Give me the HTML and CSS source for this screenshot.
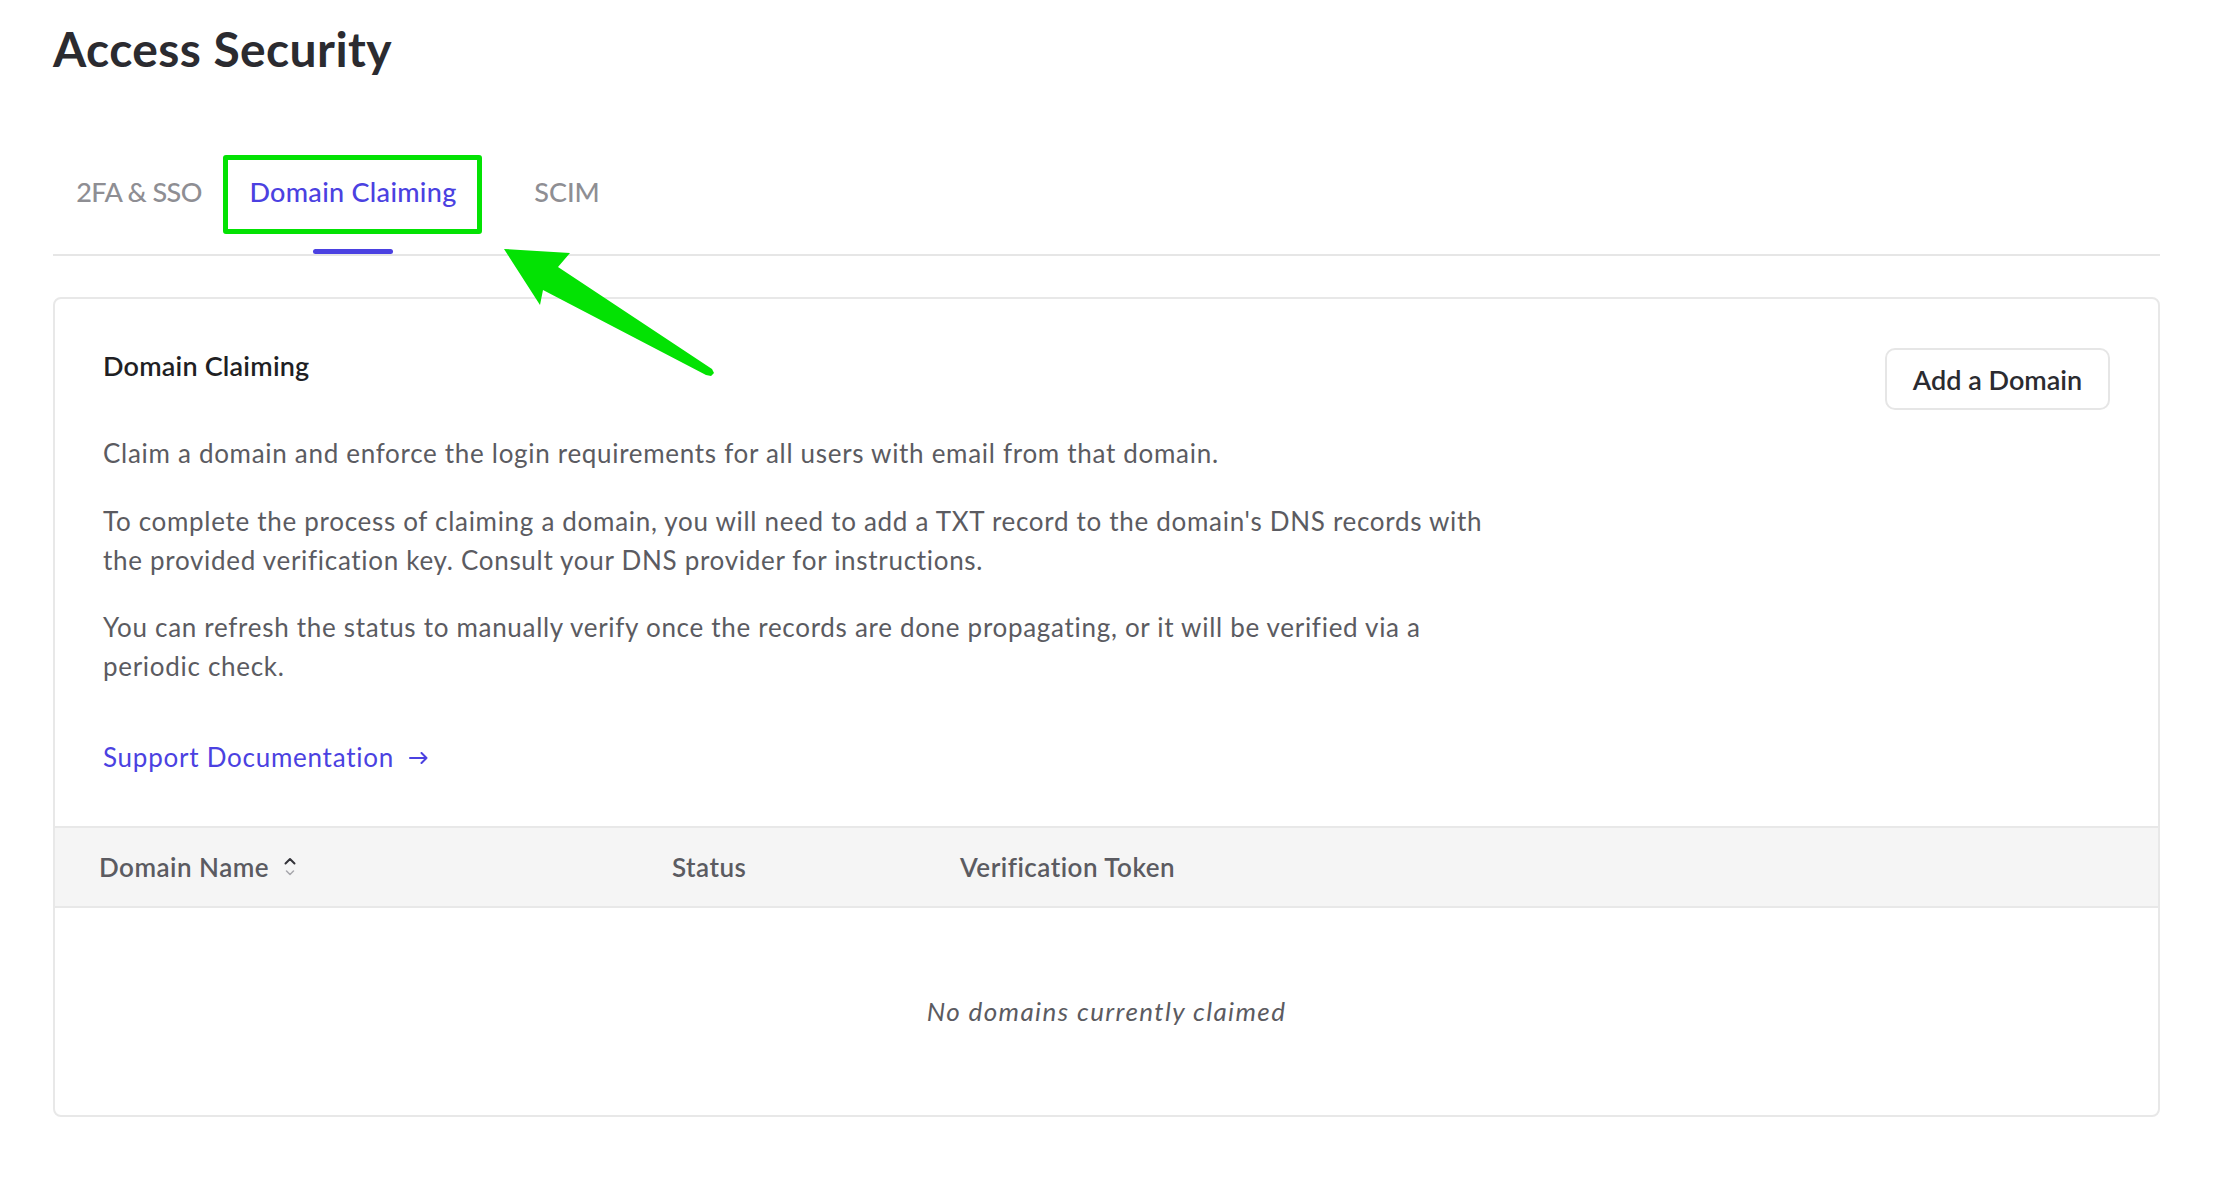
FILE: index.html
```html
<!DOCTYPE html>
<html lang="en">
<head>
<meta charset="utf-8">
<title>Access Security</title>
<link rel="stylesheet" href="styles.css">
</head>
<body>
<div class="page">
  <h1 class="title">Access Security</h1>
  <nav class="tabs">
    <div class="tab-list">
      <a class="tab tight">2FA &amp; SSO</a>
      <a class="tab active">Domain Claiming</a>
      <a class="tab">SCIM</a>
    </div>
  </nav>
  <section class="card">
    <div class="card-intro">
      <div class="card-head">
        <h2 class="card-title">Domain Claiming</h2>
        <button class="btn">Add a Domain</button>
      </div>
      <p class="first">Claim a domain and enforce the login requirements for all users with email from that domain.</p>
      <p>To complete the process of claiming a domain, you will need to add a TXT record to the domain's DNS records with the provided verification key. Consult your DNS provider for instructions.</p>
      <p>You can refresh the status to manually verify once the records are done propagating, or it will be verified via a periodic check.</p>
      <a class="doc-link">Support Documentation
        <svg class="doc-arrow" width="19" height="12" viewBox="0 0 19 12"><path d="M1 6H17.5M12.5 1L17.5 6L12.5 11" fill="none" stroke="currentColor" stroke-width="2" stroke-linecap="round" stroke-linejoin="round"/></svg>
      </a>
    </div>
    <div class="thead">
      <div class="th">Domain Name
        <svg class="sort" width="12" height="20" viewBox="0 0 12 20"><path d="M1.5 6.5L6 2L10.5 6.5" fill="none" stroke="#34343a" stroke-width="2" stroke-linecap="round" stroke-linejoin="round"/><path d="M2.5 14L6 17.5L9.5 14" fill="none" stroke="#a8a8ad" stroke-width="1.5" stroke-linecap="round" stroke-linejoin="round"/></svg>
      </div>
      <div class="th">Status</div>
      <div class="th">Verification Token</div>
    </div>
    <div class="empty">No domains currently claimed</div>
  </section>

  <div class="annot-box"></div>
  <svg class="annot-arrow" width="260" height="170" viewBox="0 0 260 170">
    <polygon points="24,29 90,33 78,47 232,149 234,153 231,156 226,155 63,70 60,85" fill="#03e203"/>
  </svg>
</div>
</body>
</html>
```

FILE: styles.css
```css
* { box-sizing: border-box; }

body {
  margin: 0;
  background: #ffffff;
  font-family: "Lato", "Open Sans", sans-serif;
  color: #2b2b30;
}

.page {
  position: relative;
  padding: 20px 62px 0 53px;
}

.title {
  margin: 0;
  font-size: 48px;
  line-height: 58px;
  font-weight: 700;
  letter-spacing: 0.4px;
  color: #2b2b30;
}

.tabs {
  margin-top: 96px;
  border-bottom: 2px solid #e6e6e6;
}

.tab-list {
  display: flex;
  margin-left: -21px;
}

.tab {
  width: 214px;
  display: flex;
  flex-direction: column;
  align-items: center;
  font-size: 27px;
  line-height: 36px;
  font-weight: 500;
  color: #8e8e93;
  cursor: pointer;
}

.tab.tight { letter-spacing: -0.6px; }
.tab.active { letter-spacing: 0.3px; }

.tab::after {
  content: "";
  width: 80px;
  height: 5px;
  margin-top: 39px;
  border-radius: 3px;
  background: transparent;
}

.tab.active { color: #4b41e1; }
.tab.active::after { background: #4b41e1; }

.card {
  margin-top: 41px;
  border: 2px solid #e8e8e8;
  border-radius: 8px;
  overflow: hidden;
}

.card-intro {
  padding: 49px 48px 48.6px 48px;
}

.card-head {
  display: flex;
  justify-content: space-between;
  align-items: flex-start;
}

.card-title {
  margin: 0;
  font-size: 27px;
  line-height: 36px;
  font-weight: 600;
  letter-spacing: 0.2px;
  color: #1f1f24;
}

.btn {
  width: 225px;
  height: 62px;
  border: 2px solid #e6e6e6;
  border-radius: 10px;
  background: #ffffff;
  font-family: inherit;
  font-size: 27px;
  font-weight: 600;
  color: #2b2b30;
  padding: 0;
}

.card-intro p {
  margin: 28.5px 0 0 0;
  max-width: 1400px;
  font-size: 26px;
  line-height: 39px;
  letter-spacing: 0.7px;
  color: #5b5b61;
}

.card-intro p.first { margin-top: 24px; }

.doc-link {
  display: flex;
  align-items: center;
  gap: 15px;
  width: max-content;
  margin-top: 52px;
  font-size: 26px;
  line-height: 39px;
  letter-spacing: 0.75px;
  color: #4b41e1;
  cursor: pointer;
}

.doc-arrow { margin-top: 0; }

.thead {
  display: grid;
  grid-template-columns: 573px 288px 1fr;
  align-items: center;
  height: 82px;
  padding-left: 44px;
  background: #f5f5f5;
  border-top: 2px solid #e8e8e8;
  border-bottom: 2px solid #e8e8e8;
}

.th {
  display: flex;
  align-items: center;
  gap: 15px;
  font-size: 26px;
  font-weight: 600;
  letter-spacing: 0.5px;
  color: #5b5b61;
}

.empty {
  height: 207px;
  display: flex;
  align-items: center;
  justify-content: center;
  font-size: 26px;
  font-style: italic;
  letter-spacing: 1.4px;
  color: #5b5b61;
}

.annot-box {
  position: absolute;
  left: 223px;
  top: 155px;
  width: 259px;
  height: 79px;
  border: 5px solid #03e203;
  border-radius: 3px;
}

.annot-arrow {
  position: absolute;
  left: 480px;
  top: 220px;
}
```
